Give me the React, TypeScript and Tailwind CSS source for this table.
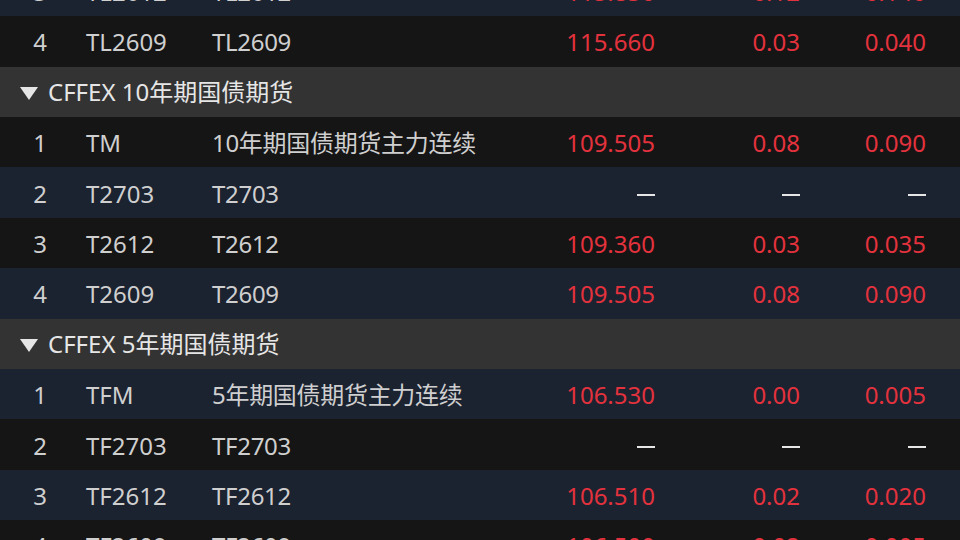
import React from "react";

type Row = { kind: "row"; idx: string; code: string; name: string; price?: string; chg?: string; pct?: string; bg: string };
type Hdr = { kind: "hdr"; title: string };

const BLUE = "bg-[#1b2230]";
const DARK = "bg-[#151515]";

const rows: (Row | Hdr)[] = [
  { kind: "row", idx: "3", code: "TL2612", name: "TL2612", price: "115.830", chg: "0.12", pct: "0.140", bg: BLUE },
  { kind: "row", idx: "4", code: "TL2609", name: "TL2609", price: "115.660", chg: "0.03", pct: "0.040", bg: DARK },
  { kind: "hdr", title: "CFFEX 10年期国债期货" },
  { kind: "row", idx: "1", code: "TM", name: "10年期国债期货主力连续", price: "109.505", chg: "0.08", pct: "0.090", bg: DARK },
  { kind: "row", idx: "2", code: "T2703", name: "T2703", bg: BLUE },
  { kind: "row", idx: "3", code: "T2612", name: "T2612", price: "109.360", chg: "0.03", pct: "0.035", bg: DARK },
  { kind: "row", idx: "4", code: "T2609", name: "T2609", price: "109.505", chg: "0.08", pct: "0.090", bg: BLUE },
  { kind: "hdr", title: "CFFEX 5年期国债期货" },
  { kind: "row", idx: "1", code: "TFM", name: "5年期国债期货主力连续", price: "106.530", chg: "0.00", pct: "0.005", bg: BLUE },
  { kind: "row", idx: "2", code: "TF2703", name: "TF2703", bg: DARK },
  { kind: "row", idx: "3", code: "TF2612", name: "TF2612", price: "106.510", chg: "0.02", pct: "0.020", bg: BLUE },
  { kind: "row", idx: "4", code: "TF2609", name: "TF2609", price: "106.500", chg: "0.02", pct: "0.005", bg: DARK },
];

function Num({ v }: { v?: string }) {
  if (v === undefined)
    return <span className="inline-block w-[18px] h-[2px] bg-[#e6e6e6] align-middle mb-[2px]" aria-label="—" />;
  return <span className="text-[#e3323d]">{v}</span>;
}

export default function App() {
  return (
    <div
      className="w-[960px] h-[540px] overflow-hidden bg-[#151515]"
      style={{ fontFamily: '"Noto Sans", "Noto Sans CJK SC", sans-serif' }}
    >
      <div className="-mt-[34.2px] flex flex-col">
        {rows.map((r, i) =>
          r.kind === "hdr" ? (
            <div key={i} className="h-[50.4px] bg-[#333333] flex items-center pl-[20px] pt-[1px] text-[24px] text-[#e6e6e6]">
              <svg width="18" height="14" viewBox="0 0 18 14" className="mr-[10px] mt-[1px]">
                <path d="M0 1 H18 L9 14 Z" fill="#e6e6e6" />
              </svg>
              <span>{r.title}</span>
            </div>
          ) : (
            <div key={i} className={`h-[50.4px] ${r.bg} flex items-center pt-[2px] text-[24px] text-[#cfcfcf] whitespace-nowrap`}>
              <div className="w-[80px] text-center">{r.idx}</div>
              <div className="w-[126px] pl-[6px]">{r.code}</div>
              <div className="w-[283px] pl-[6px] tracking-[-0.3px]">{r.name}</div>
              <div className="w-[166px] text-right"><Num v={r.price} /></div>
              <div className="w-[145px] text-right"><Num v={r.chg} /></div>
              <div className="w-[126px] text-right"><Num v={r.pct} /></div>
            </div>
          )
        )}
      </div>
    </div>
  );
}
